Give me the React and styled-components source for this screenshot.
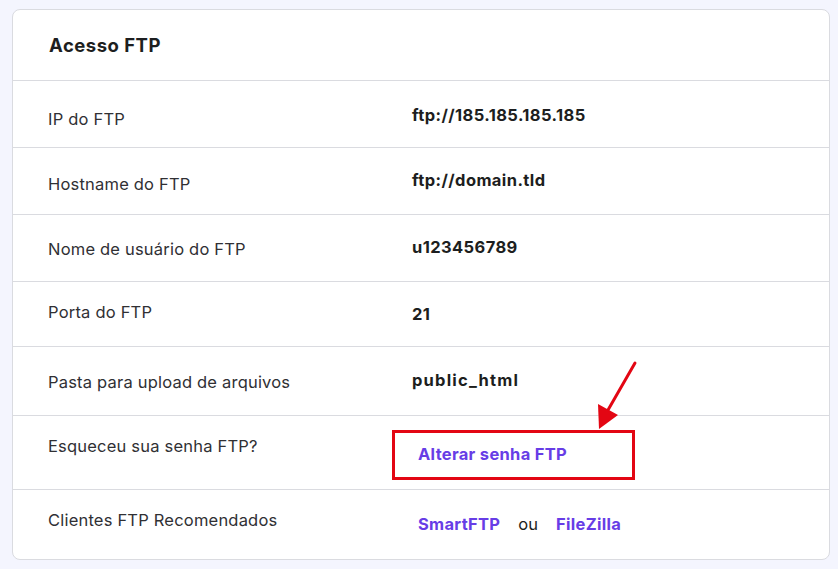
import React from "react";
import styled, { createGlobalStyle } from "styled-components";

const Global = createGlobalStyle`
  html, body { margin: 0; padding: 0; background: #f4f5fe; }
  body { font-family: "Inter", "DejaVu Sans", sans-serif; }
`;

const Page = styled.div`
  width: 838px;
  height: 569px;
  padding: 9px 8px 0 12px;
  box-sizing: border-box;
  position: relative;
`;

const Card = styled.section`
  background: #fff;
  border: 1px solid #dadbe0;
  border-radius: 8px;
  box-sizing: border-box;
  width: 818px;
  height: 551px;
  overflow: hidden;
`;

const Header = styled.h2`
  margin: 0;
  height: 71px;
  box-sizing: border-box;
  padding: 24px 0 0 36px;
  font-size: 18.5px;
  line-height: 22px;
  font-weight: 700;
  color: #1d1e20;
  border-bottom: 1px solid #dadbe0;
  letter-spacing: 0.5px;
`;

const Row = styled.div`
  display: grid;
  grid-template-columns: 364px 1fr;
  align-items: start;
  height: ${(p) => p.$h}px;
  box-sizing: border-box;
  padding: ${(p) => p.$pt}px 0 0 35px;
  border-bottom: ${(p) => (p.$last ? "none" : "1px solid #dadbe0")};
`;

const Label = styled.div`
  font-size: 16.5px;
  letter-spacing: 0.2px;
  color: #303034;
  line-height: 20px;
  padding-top: ${(p) => p.$off || 0}px;
`;

const Value = styled.div`
  font-size: 16.5px;
  letter-spacing: ${(p) => p.$ls || 0.4}px;
  font-weight: 700;
  color: #1d1e20;
  line-height: 20px;
  padding-top: ${(p) => p.$off || 0}px;
`;

const Links = styled.div`
  display: flex;
  align-items: center;
  gap: 18px;
  padding-left: 6px;
  padding-top: ${(p) => p.$off || 0}px;
  line-height: 20px;
`;

const Link = styled.a`
  font-size: 16.5px;
  letter-spacing: 0.3px;
  font-weight: 700;
  color: #673de6;
  text-decoration: none;
`;

const Or = styled.span`
  font-size: 16.5px;
  color: #1d1e20;
`;

const Highlight = styled.div`
  margin-left: -20px;
  margin-top: 3px;
  width: 243px;
  height: 50px;
  box-sizing: border-box;
  border: 3px solid #e30613;
  display: flex;
  align-items: center;
  padding-left: 23px;
  padding-bottom: 2px;
`;

const Arrow = styled.svg`
  position: absolute;
  left: 590px;
  top: 358px;
  overflow: visible;
`;

const rows = [
  { label: "IP do FTP", value: "ftp://185.185.185.185", h: 67, pt: 24, off: 4 },
  { label: "Hostname do FTP", value: "ftp://domain.tld", h: 67, pt: 22, off: 4 },
  { label: "Nome de usuário do FTP", value: "u123456789", h: 67, pt: 22, off: 2 },
  { label: "Porta do FTP", value: "21", h: 65, pt: 20, off: 0, voff: 2 },
  { label: "Pasta para upload de arquivos", value: "public_html", h: 69, pt: 23, off: 2, ls: 1.2 },
];

export default function App() {
  return (
    <>
      <Global />
      <Page>
        <Card>
          <Header>Acesso FTP</Header>
          {rows.map((r) => (
            <Row key={r.label} $h={r.h} $pt={r.pt}>
              <Label $off={r.off}>{r.label}</Label>
              <Value $off={r.voff} $ls={r.ls}>{r.value}</Value>
            </Row>
          ))}
          <Row $h={74} $pt={11}>
            <Label $off={9}>Esqueceu sua senha FTP?</Label>
            <Highlight>
              <Link href="#">Alterar senha FTP</Link>
            </Highlight>
          </Row>
          <Row $h={69} $pt={20} $last>
            <Label>Clientes FTP Recomendados</Label>
            <Links $off={4}>
              <Link href="#">SmartFTP</Link>
              <Or>ou</Or>
              <Link href="#">FileZilla</Link>
            </Links>
          </Row>
        </Card>
        <Arrow width="60" height="80" viewBox="0 0 60 80">
          <line x1="45" y1="5" x2="18" y2="52" stroke="#e30613" strokeWidth="3" strokeLinecap="round" />
          <polygon points="9,71 8,46 28,57" fill="#e30613" />
        </Arrow>
      </Page>
    </>
  );
}
